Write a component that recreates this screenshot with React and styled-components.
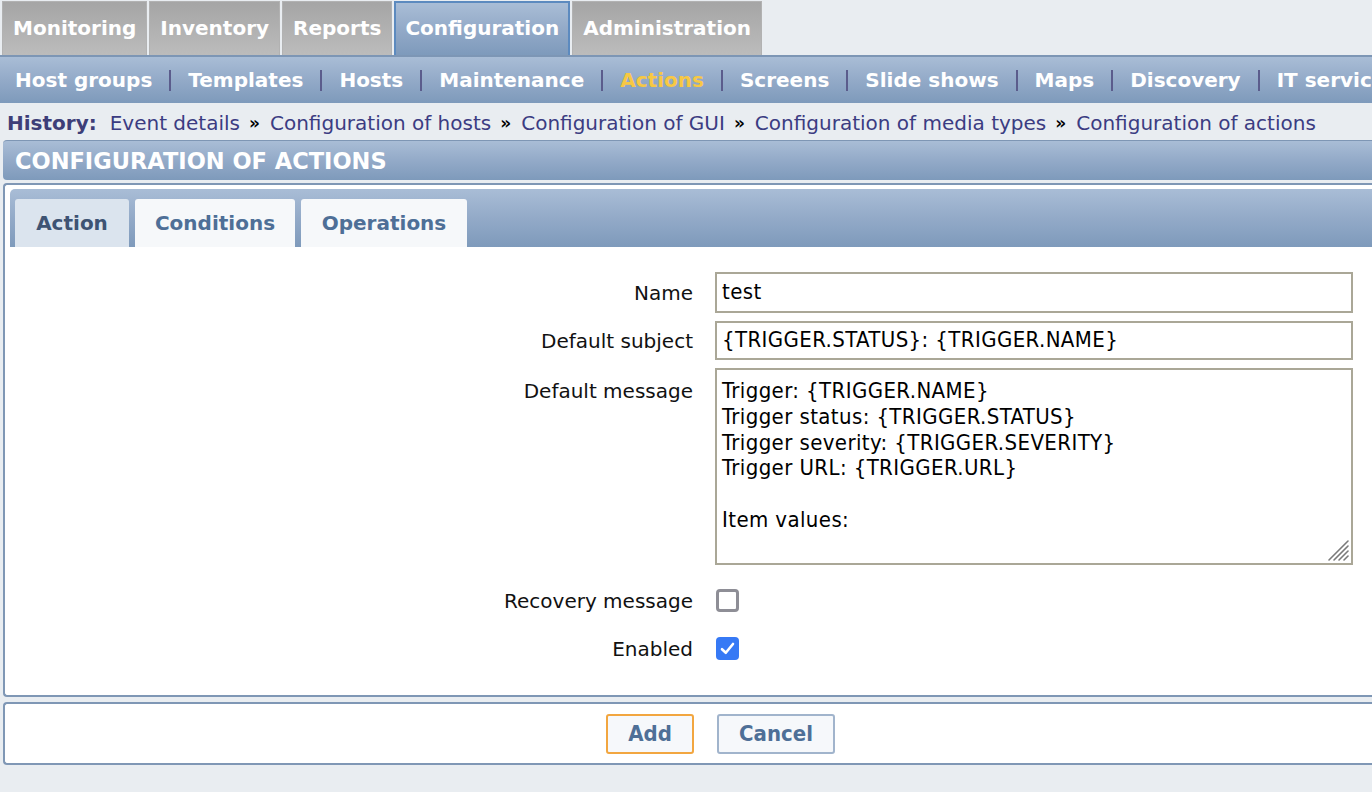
import React from "react";
import styled, { createGlobalStyle } from "styled-components";

const GlobalStyle = createGlobalStyle`
  html, body {
    margin: 0;
    padding: 0;
    background: #e9edf1;
    overflow: hidden;
  }
  body {
    font-family: "DejaVu Sans", Verdana, sans-serif;
  }
`;

const blueGradient = "linear-gradient(to bottom, #a9bdd6 0%, #93aac8 50%, #7e9abb 100%)";
const inputFont = `"DejaVu Sans Condensed", "DejaVu Sans", sans-serif`;

const Page = styled.div`
  width: 1436px;
`;

const TopMenu = styled.div`
  display: flex;
  gap: 2px;
  padding: 1px 0 0 2px;
  height: 55px;
  box-sizing: border-box;
`;

const TopTab = styled.div`
  display: flex;
  align-items: center;
  padding: 0 ${(p) => (p.$active ? 9 : 10)}px 2px;
  height: 54px;
  box-sizing: border-box;
  font-weight: bold;
  font-size: 20px;
  color: #fff;
  border: ${(p) => (p.$active ? "2px solid #5c8abf" : "1px solid #b2b2b2")};
  border-bottom: none;
  background: ${(p) =>
    p.$active ? blueGradient : "linear-gradient(to bottom, #a5a5a5 0%, #bcbcbc 100%)"};
`;

const SubMenu = styled.div`
  display: flex;
  align-items: center;
  height: 48px;
  box-sizing: border-box;
  border-top: 2px solid #7d96b5;
  background: ${blueGradient};
  padding: 0 0 0 15px;
  white-space: nowrap;
`;

const SubItem = styled.span`
  font-weight: bold;
  font-size: 20px;
  color: ${(p) => (p.$active ? "#f7c843" : "#fff")};
`;

const Sep = styled.span`
  display: inline-block;
  width: 2px;
  height: 21px;
  background: #5b5c8c;
  margin: 1px 17px 0 17px;
`;

const History = styled.div`
  display: flex;
  align-items: center;
  height: 37px;
  padding: 2px 0 0 7px;
  box-sizing: border-box;
  font-size: 20px;
  color: #3b3c82;
  white-space: nowrap;
`;

const HistoryLabel = styled.b`
  color: #3d3e78;
  margin-right: 13px;
`;

const Arrow = styled.span`
  color: #000;
  font-weight: bold;
  font-size: 17px;
  margin: 0 12px 0 9px;
  letter-spacing: -2px;
`;

const TitleBar = styled.div`
  margin: 0 0 0 3px;
  height: 40px;
  box-sizing: border-box;
  border-top: 1px solid #7e96b4;
  border-radius: 4px 0 0 4px;
  background: ${blueGradient};
  display: flex;
  align-items: center;
  padding-left: 12px;
  font-size: 22.5px;
  font-weight: bold;
  color: #fff;
  text-transform: uppercase;
`;

const Panel = styled.div`
  margin: ${(p) => p.$mt}px 0 0 3px;
  background: #fff;
  border: 2px solid #7f97b5;
  border-right: none;
  border-radius: 4px 0 0 4px;
  box-sizing: border-box;
`;

const TabStrip = styled.div`
  margin: 4px 0 0 5px;
  height: 58px;
  box-sizing: border-box;
  border-radius: 5px 0 0 0;
  background: ${blueGradient};
  display: flex;
  align-items: flex-end;
  gap: 6px;
  padding-left: 5px;
`;

const Tab = styled.div`
  height: 48px;
  box-sizing: border-box;
  display: flex;
  align-items: center;
  justify-content: center;
  width: ${(p) => p.$w}px;
  border-radius: 3px 3px 0 0;
  background: ${(p) => (p.$active ? "#dbe4ee" : "#f6f8fa")};
  color: ${(p) => (p.$active ? "#3e5373" : "#4e6f97")};
  font-weight: bold;
  font-size: 20px;
  padding-bottom: 1px;
`;

const Form = styled.div`
  display: grid;
  grid-template-columns: 688px 638px;
  column-gap: 22px;
  row-gap: 8px;
  padding: 25px 0 34px 0;
`;

const Label = styled.div`
  display: flex;
  justify-content: flex-end;
  align-items: ${(p) => (p.$center ? "center" : "flex-start")};
  font-size: 20px;
  color: #111;
  padding-top: ${(p) => p.$pt ?? 0}px;
  line-height: 22px;
`;

const TextInput = styled.div`
  height: ${(p) => p.$h}px;
  box-sizing: border-box;
  border: 2px solid #aaa797;
  padding: 0 5px 3px 5px;
  display: flex;
  align-items: center;
  font-family: ${inputFont};
  font-size: 22px;
  letter-spacing: 0.4px;
  color: #000;
`;

const AreaWrap = styled.div`
  position: relative;
`;

const TextArea = styled.textarea`
  display: block;
  height: 197px;
  width: 100%;
  box-sizing: border-box;
  border: 2px solid #aaa797;
  padding: 8px 5px 0;
  margin: 0;
  font-family: ${inputFont};
  font-size: 22px;
  letter-spacing: 0.4px;
  line-height: 25.8px;
  color: #000;
  overflow: hidden;
  resize: none;
  outline: none;
`;

const Grip = styled.svg`
  position: absolute;
  right: 3px;
  bottom: 3px;
  pointer-events: none;
`;

const CheckCell = styled.div`
  height: ${(p) => p.$h}px;
  display: flex;
  align-items: center;
`;

const Check = styled.span`
  display: inline-flex;
  align-items: center;
  justify-content: center;
  width: 23px;
  height: 23px;
  box-sizing: border-box;
  border-radius: 4px;
  border: ${(p) => (p.$on ? "none" : "3px solid #8e8e96")};
  background: ${(p) => (p.$on ? "#3679f5" : "#fff")};
  margin-left: 1px;
`;

const ButtonBar = styled.div`
  display: flex;
  justify-content: center;
  gap: 23px;
  padding: 10px 0 9px 0;
`;

const Button = styled.div`
  height: 40px;
  width: ${(p) => p.$w}px;
  box-sizing: border-box;
  border: 2px solid ${(p) => (p.$primary ? "#f2a640" : "#a1b4cc")};
  border-radius: 3px;
  background: #f6f8fb;
  display: flex;
  align-items: center;
  justify-content: center;
  font-family: ${inputFont};
  font-weight: bold;
  font-size: 22px;
  color: #4e6f97;
  padding-bottom: 1px;
`;

const topTabs = ["Monitoring", "Inventory", "Reports", "Configuration", "Administration"];
const subItems = [
  "Host groups",
  "Templates",
  "Hosts",
  "Maintenance",
  "Actions",
  "Screens",
  "Slide shows",
  "Maps",
  "Discovery",
  "IT services",
];
const history = [
  "Event details",
  "Configuration of hosts",
  "Configuration of GUI",
  "Configuration of media types",
  "Configuration of actions",
];

const message = `Trigger: {TRIGGER.NAME}
Trigger status: {TRIGGER.STATUS}
Trigger severity: {TRIGGER.SEVERITY}
Trigger URL: {TRIGGER.URL}

Item values:

1. {ITEM.NAME1} ({HOST.NAME1}:{ITEM.KEY1}): {ITEM.VALUE1}
2. {ITEM.NAME2} ({HOST.NAME2}:{ITEM.KEY2}): {ITEM.VALUE2}`;

const App = () => {
  return (
    <Page>
      <GlobalStyle />
      <TopMenu>
        {topTabs.map((t) => (
          <TopTab key={t} $active={t === "Configuration"}>
            {t}
          </TopTab>
        ))}
      </TopMenu>
      <SubMenu>
        {subItems.map((s, i) => (
          <React.Fragment key={s}>
            {i > 0 && <Sep />}
            <SubItem $active={s === "Actions"}>{s}</SubItem>
          </React.Fragment>
        ))}
      </SubMenu>
      <History>
        <HistoryLabel>History:</HistoryLabel>
        {history.map((h, i) => (
          <React.Fragment key={h}>
            {i > 0 && <Arrow>»</Arrow>}
            <span>{h}</span>
          </React.Fragment>
        ))}
      </History>
      <TitleBar>Configuration of actions</TitleBar>
      <Panel $mt={3}>
        <TabStrip>
          <Tab $active $w={114}>
            Action
          </Tab>
          <Tab $w={160}>Conditions</Tab>
          <Tab $w={166}>Operations</Tab>
        </TabStrip>
        <Form>
          <Label $center>Name</Label>
          <TextInput $h={41}>test</TextInput>
          <Label $center>Default subject</Label>
          <TextInput $h={39}>{"{TRIGGER.STATUS}: {TRIGGER.NAME}"}</TextInput>
          <Label $pt={12}>Default message</Label>
          <AreaWrap>
            <TextArea defaultValue={message} spellCheck={false} />
            <Grip width="24" height="24" viewBox="0 0 24 24">
              <g stroke="#7a7a7a" strokeWidth="1.6" strokeLinecap="round">
                <line x1="3" y1="22" x2="22" y2="3" />
                <line x1="8" y1="22" x2="22" y2="8" />
                <line x1="13" y1="22" x2="22" y2="13" />
                <line x1="18" y1="22" x2="22" y2="18" />
              </g>
            </Grip>
          </AreaWrap>
          <Label $center $pt={1}>Recovery message</Label>
          <CheckCell $h={54}>
            <Check />
          </CheckCell>
          <Label $center $pt={1}>Enabled</Label>
          <CheckCell $h={26}>
            <Check $on>
              <svg width="15" height="13" viewBox="0 0 15 13">
                <path
                  d="M2 7.2 L5.8 10.8 L13 2"
                  fill="none"
                  stroke="#fff"
                  strokeWidth="2.6"
                  strokeLinecap="round"
                  strokeLinejoin="round"
                />
              </svg>
            </Check>
          </CheckCell>
        </Form>
      </Panel>
      <Panel $mt={5}>
        <ButtonBar>
          <Button $primary $w={88}>
            Add
          </Button>
          <Button $w={118}>Cancel</Button>
        </ButtonBar>
      </Panel>
    </Page>
  );
};

export default App;
